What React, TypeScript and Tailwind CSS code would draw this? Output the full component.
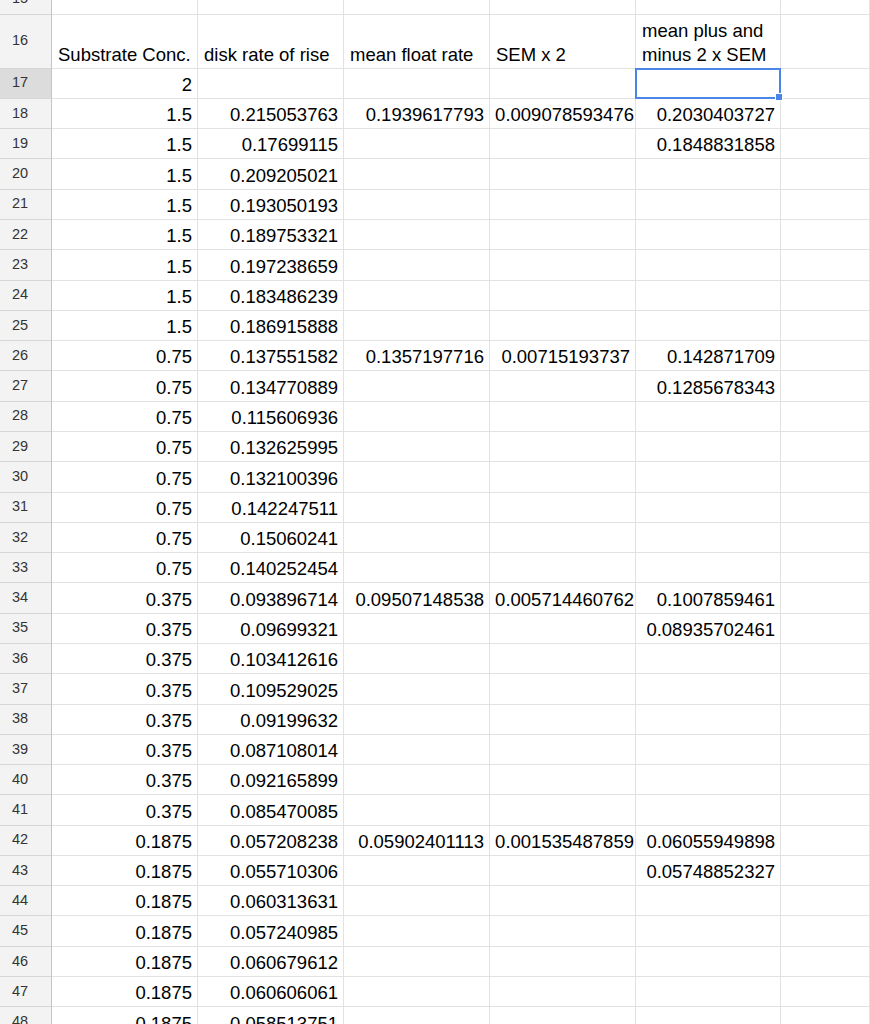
type Row = [number, string, string, string, string, string];

const rows: Row[] = [
  [17, "2", "", "", "", ""],
  [18, "1.5", "0.215053763", "0.1939617793", "0.009078593476", "0.2030403727"],
  [19, "1.5", "0.17699115", "", "", "0.1848831858"],
  [20, "1.5", "0.209205021", "", "", ""],
  [21, "1.5", "0.193050193", "", "", ""],
  [22, "1.5", "0.189753321", "", "", ""],
  [23, "1.5", "0.197238659", "", "", ""],
  [24, "1.5", "0.183486239", "", "", ""],
  [25, "1.5", "0.186915888", "", "", ""],
  [26, "0.75", "0.137551582", "0.1357197716", "0.00715193737", "0.142871709"],
  [27, "0.75", "0.134770889", "", "", "0.1285678343"],
  [28, "0.75", "0.115606936", "", "", ""],
  [29, "0.75", "0.132625995", "", "", ""],
  [30, "0.75", "0.132100396", "", "", ""],
  [31, "0.75", "0.142247511", "", "", ""],
  [32, "0.75", "0.15060241", "", "", ""],
  [33, "0.75", "0.140252454", "", "", ""],
  [34, "0.375", "0.093896714", "0.09507148538", "0.005714460762", "0.1007859461"],
  [35, "0.375", "0.09699321", "", "", "0.08935702461"],
  [36, "0.375", "0.103412616", "", "", ""],
  [37, "0.375", "0.109529025", "", "", ""],
  [38, "0.375", "0.09199632", "", "", ""],
  [39, "0.375", "0.087108014", "", "", ""],
  [40, "0.375", "0.092165899", "", "", ""],
  [41, "0.375", "0.085470085", "", "", ""],
  [42, "0.1875", "0.057208238", "0.05902401113", "0.001535487859", "0.06055949898"],
  [43, "0.1875", "0.055710306", "", "", "0.05748852327"],
  [44, "0.1875", "0.060313631", "", "", ""],
  [45, "0.1875", "0.057240985", "", "", ""],
  [46, "0.1875", "0.060679612", "", "", ""],
  [47, "0.1875", "0.060606061", "", "", ""],
  [48, "0.1875", "0.058513751", "", "", ""],
];

const grid = "grid grid-cols-[52px_146px_146px_146px_146px_145px_1fr]";

function RowHead({ n, active }: { n: number; active?: boolean }) {
  return (
    <div
      className={`flex items-center border-r border-b border-r-[#c4c4c4] border-b-[#d6d6d6] text-[14.5px] text-[#333] ${
        active ? "bg-[#dcdcdc]" : "bg-[#f3f3f3]"
      }`}
    >
      <span className="w-[40px] text-center">{n}</span>
    </div>
  );
}

function Num({ v, selected }: { v: string; selected?: boolean }) {
  return (
    <div
      className={`relative flex items-end justify-end whitespace-nowrap border-r border-b border-[#e2e2e2] pb-[3px] leading-[21px] ${
        v.length >= 14 ? "pr-[1px]" : "pr-[5px]"
      }`}
    >
      {v}
      {selected && (
        <>
          <div className="absolute top-[-1px] left-[-1px] right-[-1px] bottom-[-1px] z-10 border-2 border-[#4a86e8]" />
          <div className="absolute right-[-3px] bottom-[-3px] z-20 h-[8px] w-[8px] border border-white bg-[#4a86e8]" />
        </>
      )}
    </div>
  );
}

function Label({ children, tight }: { children: React.ReactNode; tight?: boolean }) {
  return (
    <div
      className={`flex items-end border-r border-b border-[#e2e2e2] pl-[6px] whitespace-nowrap ${
        tight ? "pb-[1px] leading-[24px]" : "pb-[3px] leading-[21px]"
      }`}
    >
      <span>{children}</span>
    </div>
  );
}

export default function App() {
  return (
    <div className="h-screen w-full overflow-hidden bg-white font-['Liberation_Sans',Arial,sans-serif] text-[18.5px] text-black">
      <div className="mt-[-15.3px]">
        {/* row 15, mostly scrolled away */}
        <div className={`${grid} h-[30.3px]`}>
          <RowHead n={15} />
          <Num v="" />
          <Num v="" />
          <Num v="" />
          <Num v="" />
          <Num v="" />
          <Num v="" />
        </div>

        {/* header row */}
        <div className={`${grid} h-[53.6px]`}>
          <RowHead n={16} />
          <Label>Substrate Conc.</Label>
          <Label>disk rate of rise</Label>
          <Label>mean float rate</Label>
          <Label>SEM x 2</Label>
          <Label tight>
            mean plus and
            <br />
            minus 2 x SEM
          </Label>
          <Label>{""}</Label>
        </div>

        {rows.map(([n, a, b, c, d, e]) => (
          <div key={n} className={`${grid} h-[30.29px]`}>
            <RowHead n={n} active={n === 17} />
            <Num v={a} />
            <Num v={b} />
            <Num v={c} />
            <Num v={d} />
            <Num v={e} selected={n === 17} />
            <Num v="" />
          </div>
        ))}
      </div>
    </div>
  );
}
